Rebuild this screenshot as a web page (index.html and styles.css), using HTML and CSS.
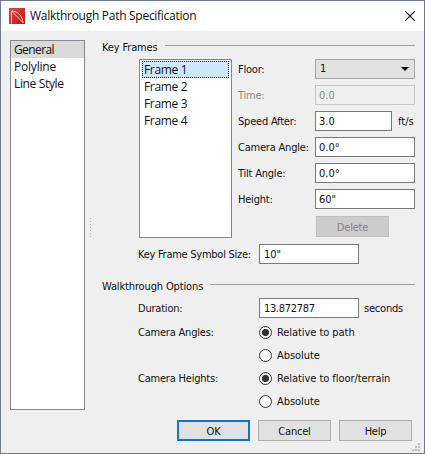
FILE: index.html
```html
<!DOCTYPE html>
<html lang="en">
<head>
<meta charset="utf-8">
<title>Walkthrough Path Specification</title>
<link rel="stylesheet" href="styles.css">
</head>
<body>
<div class="window">
  <header class="titlebar">
    <svg class="logo" width="16" height="16" viewBox="0 0 16 16">
      <defs><linearGradient id="red" x1="0" y1="0" x2="1" y2="1"><stop offset="0" stop-color="#e84b42"/><stop offset="1" stop-color="#b5161b"/></linearGradient></defs>
      <rect width="16" height="16" fill="url(#red)"/>
      <path d="M2.500 15.500V3C8.500 3 13.500 8 14 14.500M2.500 3L14.500 15" fill="none" stroke="#f8c9c2" stroke-width="1"/>
    </svg>
    <span class="title">Walkthrough Path Specification</span>
    <svg class="close" width="10" height="10" viewBox="0 0 10 10"><path d="M.3.3l9.400 9.400M9.700.3L.3 9.700" stroke="#111" stroke-width="1.150"/></svg>
  </header>
  <div class="content">
    <nav class="list nav">
      <div class="item current">General</div>
      <div class="item polyline">Polyline</div>
      <div class="item">Line Style</div>
    </nav>
    <div class="splitter"></div>
    <main class="panel">
      <h2 class="legend"><span>Key Frames</span></h2>
      <section class="frames">
        <div class="list framelist">
          <div class="item selected">Frame 1</div>
          <div class="item">Frame 2</div>
          <div class="item">Frame 3</div>
          <div class="item">Frame 4</div>
        </div>
        <div class="fields">
          <label>Floor:</label><div class="input select">1<svg width="8" height="4" viewBox="0 0 8 4"><path d="M0 0h8L4 4z"/></svg></div>
          <label class="off">Time:</label><div class="input off">0.0</div>
          <label>Speed After:</label><div class="with-unit"><div class="input">3.0</div><span>ft/s</span></div>
          <label>Camera Angle:</label><div class="input">0.0°</div>
          <label>Tilt Angle:</label><div class="input">0.0°</div>
          <label>Height:</label><div class="input">60"</div>
          <button class="delete" disabled>Delete</button>
        </div>
      </section>
      <div class="row symbol"><label>Key Frame Symbol Size:</label><div class="input">10"</div></div>
      <h2 class="legend options"><span>Walkthrough Options</span></h2>
      <div class="row duration"><label>Duration:</label><div class="input">13.872787</div><span class="unit">seconds</span></div>
      <div class="row choice"><label>Camera Angles:</label><i class="radio on"></i><span>Relative to path</span></div>
      <div class="row choice"><label></label><i class="radio"></i><span>Absolute</span></div>
      <div class="row choice"><label>Camera Heights:</label><i class="radio on"></i><span>Relative to floor/terrain</span></div>
      <div class="row choice"><label></label><i class="radio"></i><span>Absolute</span></div>
    </main>
  </div>
  <footer class="actions">
    <button class="primary">OK</button><button>Cancel</button><button>Help</button>
  </footer>
  <svg class="grip" width="8" height="8" viewBox="0 0 8 8"><path d="M6 0h2v2H6zM3 3h2v2H3zM6 3h2v2H6zM0 6h2v2H0zM3 6h2v2H3zM6 6h2v2H6z" fill="#bfbfbf"/></svg>
</div>
</body>
</html>
```
FILE: styles.css
```css
* { box-sizing: border-box; }
body {
  margin: 0;
  color: #111;
  font: 11px/18px "DejaVu Sans Condensed", "DejaVu Sans", sans-serif;
  font-stretch: condensed;
}
.window {
  position: relative;
  width: 425px;
  height: 454px;
  background: #efefef;
  border: 1px solid #707b91;
}
.titlebar {
  display: flex;
  align-items: center;
  height: 30px;
  padding: 0 9px 0 8px;
  background: #fff;
}
.title {
  flex: 1;
  margin-left: 5px;
  font: 12px/18px "Open Sans", sans-serif;
  letter-spacing: -0.28px;
}
.content { display: flex; height: 379px; padding: 9px 8px 0 9px; }
.list {
  background: #fff;
  border: 1px solid #828790;
  font: 12px/17px "Open Sans", sans-serif;
  letter-spacing: -0.35px;
}
.item { height: 17px; padding-left: 3px; line-height: 18px; }
.nav { width: 75px; height: 370px; }
.polyline { letter-spacing: -0.2px; }
.current { background: #d9d9d9; letter-spacing: -0.6px; }
.splitter {
  width: 1px;
  height: 19px;
  margin: 178px 11px 0 5px;
  background: repeating-linear-gradient(#bbb 0 1px, transparent 1px 3px);
}
.panel { width: 313px; }
.legend {
  display: flex;
  height: 19px;
  margin: 0;
  font-size: 11px;
  font-weight: 400;
  line-height: 16px;
  letter-spacing: -0.14px;
}
.legend::after {
  content: "";
  flex: 1;
  height: 1px;
  margin: 5px 0 0 7px;
  background: #a0a0a5;
}
.frames { display: flex; padding-left: 37px; }
.framelist { width: 93px; height: 179px; padding: 1px 2px; }
.framelist .item { padding-left: 2px; }
.framelist .selected { background: #cce8ff; outline: 1px dotted #111; outline-offset: -1px; }
.fields {
  display: grid;
  grid-template-columns: 77px 100px;
  grid-auto-rows: 20px;
  row-gap: 6px;
  margin-left: 6px;
}
label, .unit, .choice span { white-space: nowrap; letter-spacing: -0.21px; }
.choice span { letter-spacing: -0.06px; padding-top: 1px; }
.fields label { line-height: 22px; }
.input {
  width: 100px;
  height: 20px;
  padding-left: 3px;
  border: 1px solid #7a7a7a;
  background: #fff;
  line-height: 20px;
}
.select {
  display: flex;
  align-items: center;
  justify-content: space-between;
  padding-left: 4px;
  padding-right: 5px;
  background: #e1e1e1;
  border-color: #a5a5a5;
}
.off { color: #8b8b8b; }
.input.off { background: #efefef; border-color: #c6c6c6; }
.with-unit { display: flex; gap: 6px; line-height: 22px; }
.with-unit .input { width: 77px; }
button {
  width: 73px;
  height: 21px;
  padding: 2px 0 0;
  color: #111;
  font: inherit;
  line-height: 17px;
  letter-spacing: -0.21px;
  border: 1px solid #adadad;
  background: #e1e1e1;
}
.delete {
  grid-column: 2;
  margin: 1px 0 0 1px;
  background: #ccc;
  border-color: #bfbfbf;
  color: #838383;
}
.row { display: flex; padding-left: 36px; }
.row label { width: 121px; }
.row .input { padding-left: 4px; }
.symbol { height: 20px; margin-top: 6px; line-height: 22px; }
.symbol label { letter-spacing: -0.26px; }
.options { margin-top: 15px; }
.duration { height: 20px; line-height: 22px; }
.duration .input { letter-spacing: -0.3px; }
.unit { margin-left: 5px; }
.choice { height: 23px; align-items: center; }
.choice label { padding-top: 1px; }
.duration + .choice { margin-top: 3px; }
.radio {
  width: 13px;
  height: 13px;
  margin-right: 5px;
  border: 1px solid #333;
  border-radius: 50%;
  background: #fff;
}
.radio.on { background: radial-gradient(circle, #333 0 3.3px, #fff 3.900px); }
.actions { display: flex; justify-content: flex-end; gap: 8px; padding: 10px 12px 0 0; }
.primary { border: 2px solid #0078d7; line-height: 15px; }
.grip { position: absolute; right: 4px; bottom: 2px; }
```
